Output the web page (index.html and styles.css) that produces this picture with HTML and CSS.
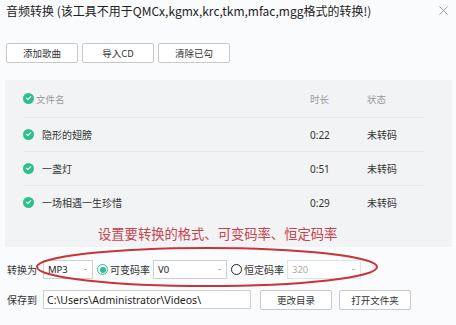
FILE: index.html
```html
<!DOCTYPE html>
<html lang="zh-CN">
<head>
    <meta charset="UTF-8">
    <title>音频转换</title>
    <link rel="stylesheet" href="styles.css">
</head>
<body>
<div class="window">
    <div class="titlebar">
        <span class="title">音频转换 (该工具不用于QMCx,kgmx,krc,tkm,mfac,mgg格式的转换!)</span>
        <svg class="close" width="9" height="9" viewBox="0 0 9 9"><path d="M0.5 0.5L8.5 8.5M8.5 0.5L0.5 8.5" stroke="#9a9a9a" stroke-width="1"/></svg>
    </div>

    <div class="toolbar">
        <button class="btn">添加歌曲</button>
        <button class="btn">导入CD</button>
        <button class="btn">清除已勾</button>
    </div>

    <div class="panel">
        <div class="list">
            <div class="row head">
                <div class="name"><span class="check"></span>文件名</div>
                <div>时长</div>
                <div>状态</div>
            </div>
            <div class="row">
                <div class="name"><span class="check"></span>隐形的翅膀</div>
                <div class="num">0:22</div>
                <div>未转码</div>
            </div>
            <div class="row">
                <div class="name"><span class="check"></span>一盏灯</div>
                <div class="num">0:51</div>
                <div>未转码</div>
            </div>
            <div class="row">
                <div class="name"><span class="check"></span>一场相遇一生珍惜</div>
                <div class="num">0:29</div>
                <div>未转码</div>
            </div>
        </div>
        <div class="note">设置要转换的格式、可变码率、恒定码率</div>
    </div>

    <div class="settings">
        <div class="line">
            <span class="label">转换为</span>
            <div class="select w-fmt"><span>MP3</span><i class="arrow"></i></div>
            <span class="radio on"></span>
            <span class="opt">可变码率</span>
            <div class="select w-rate"><span>V0</span><i class="arrow"></i></div>
            <span class="radio"></span>
            <span class="opt">恒定码率</span>
            <div class="select w-rate disabled"><span>320</span><i class="arrow"></i></div>
        </div>
        <div class="line">
            <span class="label">保存到</span>
            <div class="path">C:\Users\Administrator\Videos\</div>
            <button class="btn">更改目录</button>
            <button class="btn">打开文件夹</button>
        </div>
        <svg class="circle-mark" width="350" height="44" viewBox="0 0 350 44">
            <ellipse cx="173" cy="20" rx="170" ry="19" fill="none" stroke="#c9343a" stroke-width="2"/>
        </svg>
    </div>
</div>
</body>
</html>
```

FILE: styles.css
```css
body {
    margin: 0;
    background: #fafbfc;
    font-family: "Noto Sans CJK SC", "Noto Sans", sans-serif;
    color: #333;
}
.window {
    width: 456px;
    height: 325px;
    position: relative;
    overflow: hidden;
}
.titlebar {
    display: flex;
    justify-content: space-between;
    align-items: center;
    height: 20px;
    padding: 0 6px 0 6px;
}
.title {
    font-size: 12px;
    color: #222;
}
.close {
    margin-right: 2px;
}
.toolbar {
    display: flex;
    gap: 4px;
    padding: 23px 6px 0 6px;
}
.btn {
    width: 72px;
    height: 20px;
    padding: 0;
    border: 1px solid #c9c9c9;
    border-radius: 2px;
    background: #fff;
    font-family: inherit;
    font-size: 9.5px;
    color: #333;
}
.panel {
    margin: 17px 4px 0 5px;
    height: 167px;
    background: #f2f3f5;
}
.list {
    margin: 0 27px 0 18px;
}
.row {
    display: grid;
    grid-template-columns: 287px 57px 1fr;
    align-items: center;
    height: 33px;
    border-bottom: 1px solid #e9eaec;
    font-size: 10px;
    color: #333;
}
.row:last-child {
    border-bottom: none;
}
.row.head {
    height: 37px;
    color: #9a9a9a;
    font-size: 9.5px;
}
.row.head .name {
    gap: 2px;
}
.name {
    display: flex;
    align-items: center;
    gap: 8px;
}
.num {
    font-family: "Noto Sans", sans-serif;
}
.check {
    width: 11px;
    height: 11px;
    border-radius: 50%;
    background: #2fbf8d;
    position: relative;
    flex: none;
}
.check::after {
    content: "";
    position: absolute;
    left: 3px;
    top: 2.5px;
    width: 4px;
    height: 2px;
    border-left: 1.3px solid #fff;
    border-bottom: 1.3px solid #fff;
    transform: rotate(-45deg);
}
.note {
    color: #c8424c;
    font-size: 13.3px;
    padding: 5px 0 0 93px;
}
.settings {
    position: relative;
    padding: 13px 0 0 7px;
}
.line {
    display: flex;
    align-items: center;
    height: 19px;
    margin-bottom: 11px;
    font-size: 10px;
}
.label {
    width: 36px;
    flex: none;
}
.select {
    height: 17px;
    border: 1px solid #cfcfcf;
    background: #fff;
    display: flex;
    align-items: center;
    justify-content: space-between;
    padding: 0 5px 0 4px;
    font-family: "Noto Sans", sans-serif;
    font-size: 9.5px;
    color: #222;
    box-sizing: content-box;
}
.w-fmt {
    width: 39px;
}
.w-rate {
    width: 63px;
}
.select.disabled {
    color: #aaa;
    border-color: #e2e2e2;
}
.arrow {
    width: 3px;
    height: 1px;
    background: #bbb;
}
.radio {
    width: 9px;
    height: 9px;
    border: 1.5px solid #222;
    border-radius: 50%;
    margin: 0 2px 0 4px;
    background: #fff;
    position: relative;
}
.radio.on {
    border-color: #2fbf8d;
}
.radio.on::after {
    content: "";
    position: absolute;
    left: 1.5px;
    top: 1.5px;
    width: 6px;
    height: 6px;
    border-radius: 50%;
    background: #2fbf8d;
}
.opt {
    margin-right: 3px;
}
.path {
    width: 203px;
    height: 17px;
    border: 1px solid #cfcfcf;
    background: #fff;
    padding: 0 0 0 3px;
    display: flex;
    align-items: center;
    font-family: "Noto Sans", sans-serif;
    font-size: 10.5px;
    color: #222;
    margin-right: 9px;
}
.line .btn {
    margin-right: 7px;
    height: 20px;
}
.circle-mark {
    position: absolute;
    left: 34px;
    top: 0px;
}
```
